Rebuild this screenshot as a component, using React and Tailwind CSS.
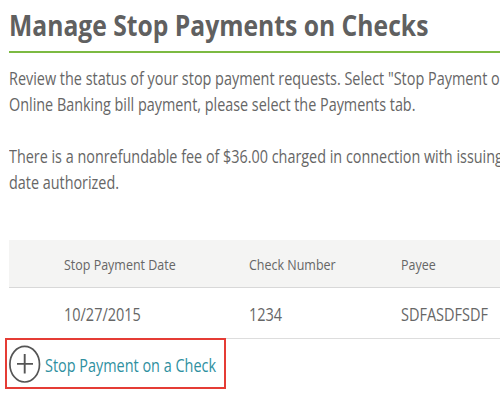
const columns = [
  { label: 'Stop Payment Date', value: '10/27/2015', width: 'w-[185px]' },
  { label: 'Check Number', value: '1234', width: 'w-[152px]' },
  { label: 'Payee', value: 'SDFASDFSDF', width: 'w-[99px]' },
];

function Line({ children, scale = 'scale-x-[0.832]' }) {
  return (
    <span className={`block w-max origin-left whitespace-nowrap ${scale}`}>{children}</span>
  );
}

function PlusIcon() {
  return (
    <svg className="h-[38px] w-[32px] shrink-0" viewBox="0 0 32 38" fill="none" stroke="#555555">
      <ellipse cx="15.7" cy="19.2" rx="14.8" ry="17.8" strokeWidth="1.7" />
      <path d="M8 18.9H24M15.7 9V28.5" strokeWidth="1.9" />
    </svg>
  );
}

export default function App() {
  return (
    <main className="h-[400px] w-[500px] overflow-hidden bg-white pl-[9px] font-['Open_Sans','Noto_Sans',sans-serif] text-[17.3px] leading-[26px] text-[#666666]">
      <h1 className="h-[53px] border-b-2 border-[#7cba42] text-[29px] leading-[49px] font-bold text-[#606060]">
        <Line scale="scale-x-[0.851]">Manage Stop Payments on Checks</Line>
      </h1>
      <section className="flex flex-col gap-[26px] pt-[13px]">
        <div>
          <Line scale="scale-x-[0.834]">Review the status of your stop payment requests. Select "Stop Payment o</Line>
          <Line>Online Banking bill payment, please select the Payments tab.</Line>
        </div>
        <div>
          <Line>There is a nonrefundable fee of $36.00 charged in connection with issuing</Line>
          <Line>date authorized.</Line>
        </div>
      </section>
      <section className="mt-[44px]">
        <div className="flex h-12 items-center border-b border-[#d8d8d8] bg-[#f4f4f3] pt-px pl-[55px] text-[15px]">
          {columns.map((c) => (
            <div key={c.label} className={`shrink-0 ${c.width}`}>
              <Line>{c.label}</Line>
            </div>
          ))}
        </div>
        <div className="flex h-[51px] items-center border-b border-[#dddddd] pt-[3px] pl-[55px]">
          {columns.map((c) => (
            <div key={c.label} className={`shrink-0 ${c.width}`}>
              <Line scale="scale-x-[0.838]">{c.value}</Line>
            </div>
          ))}
        </div>
      </section>
      <button className="relative -mt-px -ml-1 flex h-[51px] w-[221px] items-center gap-1 border-2 border-[#e53c35] bg-white pl-[2px] text-[#2f909f]">
        <PlusIcon />
        <span className="pt-[4px]">
          <Line scale="scale-x-[0.835]">Stop Payment on a Check</Line>
        </span>
      </button>
    </main>
  );
}
